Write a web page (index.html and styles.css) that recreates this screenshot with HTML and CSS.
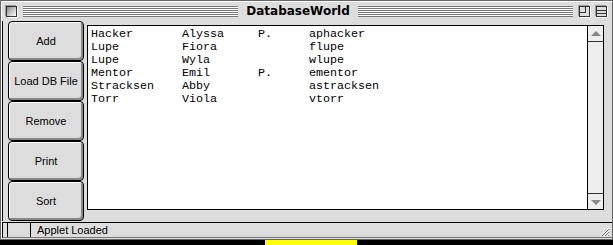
FILE: index.html
```
<!DOCTYPE html>
<html lang="en">
<head>
    <meta charset="UTF-8">
    <title>DatabaseWorld</title>
    <link rel="stylesheet" href="styles.css">
</head>
<body>
    <!-- applet window -->
    <div class="window">
        <div class="titlebar">
            <div class="close-box"></div>
            <div class="stripes"></div>
            <div class="title">DatabaseWorld</div>
            <div class="stripes"></div>
            <div class="zoom-box"><span></span></div>
            <div class="shade-box"></div>
        </div>

        <div class="content">
            <div class="buttons">
                <button class="button">Add</button>
                <button class="button">Load DB File</button>
                <button class="button">Remove</button>
                <button class="button">Print</button>
                <button class="button">Sort</button>
            </div>

            <div class="list">
                <div class="rows">
                    <div class="row"><span>Hacker</span><span>Alyssa</span><span>P.</span><span>aphacker</span></div>
                    <div class="row"><span>Lupe</span><span>Fiora</span><span></span><span>flupe</span></div>
                    <div class="row"><span>Lupe</span><span>Wyla</span><span></span><span>wlupe</span></div>
                    <div class="row"><span>Mentor</span><span>Emil</span><span>P.</span><span>ementor</span></div>
                    <div class="row"><span>Stracksen</span><span>Abby</span><span></span><span>astracksen</span></div>
                    <div class="row"><span>Torr</span><span>Viola</span><span></span><span>vtorr</span></div>
                </div>
                <div class="scrollbar">
                    <div class="arrow up"></div>
                    <div class="track"></div>
                    <div class="arrow down"></div>
                </div>
            </div>
        </div>

        <div class="status">
            <div class="status-cell"></div>
            <div class="status-text">Applet Loaded</div>
            <div class="grow-box">
                <svg width="12" height="12" viewBox="0 0 12 12">
                    <path d="M11 3 L3 11 M11 6 L6 11 M11 9 L9 11" stroke="#fff" stroke-width="1"/>
                    <path d="M11 4 L4 11 M11 7 L7 11 M11 10 L10 11" stroke="#777" stroke-width="1"/>
                </svg>
            </div>
        </div>
    </div>

    <!-- whatever lies under the window -->
    <div class="desk">
        <div class="desk-block"></div>
    </div>
</body>
</html>
```

FILE: styles.css
```
body {
    margin: 0;
    padding: 0;
    background-color: #fff;
    font-family: "Liberation Sans", Arial, sans-serif;
}
.window {
    width: 611px;
    height: 238px;
    background-color: #dddddd;
    border: 1px solid #666;
    box-shadow: inset 1px 1px #fff;
    display: flex;
    flex-direction: column;
}
.titlebar {
    height: 20px;
    display: flex;
    align-items: center;
    padding: 0 4px;
    gap: 4px;
}
.close-box {
    width: 9px;
    height: 9px;
    margin-left: 1px;
    border: 1px solid #333;
    background: linear-gradient(135deg, #888, #fff);
    box-shadow: 1px 1px #fff, -1px -1px #999;
}
.stripes {
    flex: 1;
    height: 11px;
    margin: 0 2px;
    background: repeating-linear-gradient(to bottom, #777 0 1px, #fff 1px 2px);
}
.title {
    font-family: "DejaVu Sans", Arial, sans-serif;
    font-weight: bold;
    font-size: 12px;
    padding: 0 2px;
    color: #000;
}
.zoom-box, .shade-box {
    width: 9px;
    height: 9px;
    border: 1px solid #333;
    background-color: #ddd;
    box-shadow: 1px 1px #fff, -1px -1px #999;
    position: relative;
}
.zoom-box span {
    position: absolute;
    left: 0;
    top: 0;
    width: 5px;
    height: 5px;
    border-right: 1px solid #333;
    border-bottom: 1px solid #333;
}
.shade-box {
    margin-left: 2px;
    margin-right: 1px;
    background: linear-gradient(to bottom, #ddd 0 3px, #333 3px 4px, #ddd 4px 6px, #333 6px 7px, #ddd 7px);
}
.content {
    display: flex;
    align-items: flex-start;
    height: 200px;
    padding-left: 5px;
    border-left: 1px solid #000;
    margin-left: 1px;
}
.buttons {
    display: flex;
    flex-direction: column;
    width: 76px;
}
.button {
    height: 40px;
    margin: 0;
    padding: 0;
    font-family: "Liberation Sans", Arial, sans-serif;
    font-size: 11px;
    color: #000;
    background-color: #dddddd;
    border: 1px solid #000;
    border-radius: 4px;
    box-shadow: inset 1px 1px #fff, inset -2px -2px #888;
    cursor: pointer;
}
.list {
    margin-top: 4px;
    margin-left: 3px;
    width: 515px;
    height: 183px;
    background-color: #fff;
    border: 1px solid #000;
    display: flex;
}
.rows {
    flex: 1;
    padding: 2px 0 0 3px;
    font-family: "Liberation Mono", "Courier New", monospace;
    font-size: 11.7px;
    color: #000;
}
.row {
    display: grid;
    grid-template-columns: 91px 76px 51px 1fr;
    height: 13px;
    line-height: 13px;
    white-space: pre;
}
.scrollbar {
    width: 15px;
    border-left: 1px solid #000;
    background-color: #eeeeee;
    display: flex;
    flex-direction: column;
}
.track {
    flex: 1;
}
.arrow {
    height: 15px;
    position: relative;
}
.arrow.up {
    border-bottom: 1px solid #333;
}
.arrow.down {
    border-top: 1px solid #333;
}
.arrow::after {
    content: "";
    position: absolute;
    left: 3px;
    border-left: 5px solid transparent;
    border-right: 5px solid transparent;
}
.arrow.up::after {
    top: 5px;
    border-bottom: 5px solid #888;
}
.arrow.down::after {
    top: 6px;
    border-top: 5px solid #888;
}
.status {
    height: 14px;
    margin-top: 1px;
    margin-left: 1px;
    display: flex;
    align-items: stretch;
    border-top: 1px solid #000;
    border-left: 1px solid #000;
    border-bottom: 1px solid #777;
}
.status-cell {
    width: 22px;
    margin-left: 4px;
    border-left: 1px solid #000;
    border-right: 1px solid #000;
}
.status-text {
    flex: 1;
    padding-left: 6px;
    font-size: 11px;
    line-height: 14px;
    color: #000;
}
.grow-box {
    width: 16px;
    display: flex;
    align-items: flex-end;
    justify-content: center;
}
.desk {
    height: 5px;
    background-color: #000;
    padding-left: 265px;
}
.desk-block {
    width: 92px;
    height: 5px;
    background-color: #ffff00;
}
```
